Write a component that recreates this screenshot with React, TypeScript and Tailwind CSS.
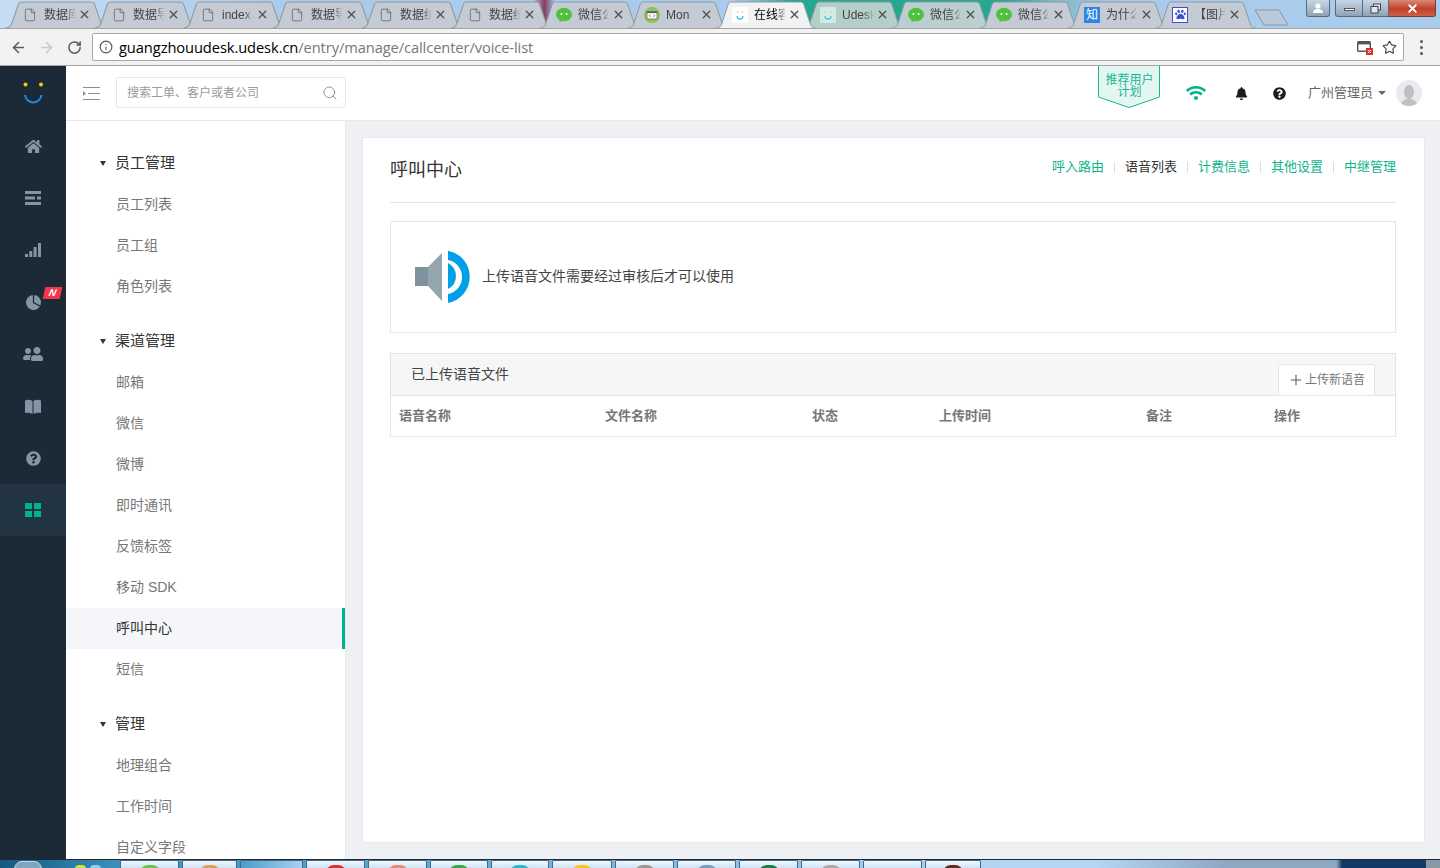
import React from "react";
import { ArrowLeft, ArrowRight, File, Info, RotateCw, Search, Star, X, Plus } from "lucide-react";
import { FaBell, FaHome, FaPaw, FaQuestionCircle, FaUserFriends, FaWifi } from "react-icons/fa";

const FONT = "[font-family:'Liberation_Sans','Noto_Sans_CJK_SC',sans-serif]";

const WechatIcon = () => (
  <svg width="16" height="16" viewBox="0 0 16 16">
    <ellipse cx="8" cy="7.500" rx="8" ry="6.800" fill="#4fc13f" />
    <path d="M4 12l-.6 3.400L7 13z" fill="#4fc13f" />
    <circle cx="5.400" cy="7" r="1" fill="#fff" />
    <circle cx="10.600" cy="7" r="1" fill="#fff" />
  </svg>
);

const DocIcon = () => <File size={14} strokeWidth={1.2} className="text-[#555]" />;

const MonIcon = () => (
  <svg width="16" height="16" viewBox="0 0 16 16">
    <circle cx="8" cy="8" r="8" fill="#8bc25a" />
    <rect x="3" y="4.500" width="10" height="7.500" fill="#f4f6f2" stroke="#555" strokeWidth=".6" />
    <rect x="3" y="4.500" width="10" height="1.500" fill="#555" />
    <path d="M6.500 7.500l-1.200 1.200 1.200 1.200M9.500 7.500l1.200 1.200-1.200 1.200" fill="none" stroke="#555" strokeWidth=".7" />
  </svg>
);

const SmileIcon = ({ bg }: { bg: string }) => (
  <svg width="16" height="16" viewBox="0 0 16 16">
    <rect width="16" height="16" fill={bg} />
    <circle cx="5.500" cy="5" r=".8" fill="#e8c93a" />
    <circle cx="10.500" cy="5" r=".8" fill="#e8c93a" />
    <path d="M5 9a3 3 0 006 0" fill="none" stroke="#48c6dc" strokeWidth="1.300" />
  </svg>
);

const ZhiIcon = () => (
  <span className="flex h-4 w-4 items-center justify-center bg-[#2b87e3] text-[12px] leading-none text-white">知</span>
);

const BaiduIcon = () => (
  <span className="flex h-4 w-4 items-center justify-center border border-[#3c4fd8] bg-white">
    <FaPaw size={11} className="text-[#3c4fd8]" />
  </span>
);

const tabs = [
  { icon: <DocIcon />, title: "数据库设计" },
  { icon: <DocIcon />, title: "数据导出" },
  { icon: <DocIcon />, title: "index" },
  { icon: <DocIcon />, title: "数据导入" },
  { icon: <DocIcon />, title: "数据统计" },
  { icon: <DocIcon />, title: "数据统计" },
  { icon: <WechatIcon />, title: "微信公众" },
  { icon: <MonIcon />, title: "Mon" },
  { icon: <SmileIcon bg="#ffffff" />, title: "在线客服", active: true },
  { icon: <SmileIcon bg="#d2ebe6" />, title: "Udesk", fill: "#b4cfca" },
  { icon: <WechatIcon />, title: "微信公众", fill: "#bccfd0" },
  { icon: <WechatIcon />, title: "微信公众" },
  { icon: <ZhiIcon />, title: "为什么" },
  { icon: <BaiduIcon />, title: "【图片" },
];

const Tab = ({
  icon,
  title,
  active,
  fill,
  wide,
}: {
  icon: React.ReactNode;
  title: string;
  active?: boolean;
  fill?: string;
  wide?: boolean;
}) => (
  <div
    className={`relative -mr-[12px] flex h-[27px] shrink-0 items-center pl-[16px] ${wide ? "w-[101px]" : "w-[100px]"} ${
      active ? "z-10" : ""
    }`}
  >
    <svg className="absolute inset-0 h-full w-full" viewBox="0 0 100 27" preserveAspectRatio="none">
      <path
        d="M0 27C4 27 5 25 6 22L12 4C13 1 14 1 17 1H83C86 1 87 1 88 4L94 22C95 25 96 27 100 27"
        fill={active ? "#f2f2f2" : fill || "#c5cbd5"}
        stroke="#8f98a4"
      />
    </svg>
    <span className="relative flex h-4 w-4 items-center justify-center">{icon}</span>
    <span
      className={`relative ml-[6px] w-[32px] overflow-hidden whitespace-nowrap text-[12px] leading-4 [mask-image:linear-gradient(90deg,#000_70%,transparent)] ${
        active ? "text-black" : "text-[#444]"
      }`}
    >
      {title}
    </span>
    <X size={13} strokeWidth={2.6} className="relative ml-[2px] text-[#555]" />
  </div>
);

const WindowControls = () => (
  <div className="absolute right-[4px] top-0 z-20 flex h-[17px] items-stretch">
    <div className="mr-[5px] flex w-[24px] items-center justify-center rounded-b-[3px] border border-t-0 border-[#5a6b7c] bg-[linear-gradient(#c9d6e3,#8ea3b8)]">
      <svg width="10" height="11" viewBox="0 0 10 11">
        <circle cx="5" cy="3" r="2.600" fill="#fff" />
        <path d="M0 10c0-3 2-4 5-4s5 1 5 4z" fill="#fff" />
      </svg>
    </div>
    <div className="flex w-[28px] items-center justify-center rounded-bl-[3px] border border-t-0 border-[#5a6b7c] bg-[linear-gradient(#c9d6e3,#8ea3b8)]">
      <span className="mt-[3px] h-[3px] w-[11px] border border-[#555] bg-white" />
    </div>
    <div className="flex w-[26px] items-center justify-center border-b border-r border-[#5a6b7c] bg-[linear-gradient(#c9d6e3,#8ea3b8)]">
      <svg width="11" height="11" viewBox="0 0 11 11" fill="none" stroke="#444">
        <rect x="3.500" y="1" width="7" height="6" fill="#dfe6ee" />
        <rect x="1" y="3.500" width="7" height="6.500" fill="#dfe6ee" />
      </svg>
    </div>
    <div className="flex w-[47px] items-center justify-center rounded-br-[3px] border-b border-r border-[#7a4038] bg-[linear-gradient(#d98a78,#c13f28_55%,#d0604a)]">
      <X size={13} strokeWidth={3.4} className="text-white" />
    </div>
  </div>
);

const BrowserChrome = () => (
  <>
    <div className="relative flex h-[28px] shrink-0 items-end overflow-hidden bg-[linear-gradient(90deg,#c6ddf4_0,#a9cbec_20%,#a9cbec_37%,#85405f_37.8%,#a9cbec_38.6%,#a9cbec_51%,#27a78f_55%,#27a78f_70%,#7db8c8_73%,#a9cbec_78%,#a9cbec_100%)] pl-[6px]">
      {tabs.map((t, i) => (
        <Tab key={`tab-${i + 1}`} {...t} wide={i < 6} />
      ))}
      <svg width="36" height="20" viewBox="0 0 36 20" className="relative mb-[1px] ml-[10px] shrink-0">
        <path d="M1 3h24l9 15H10z" fill="#b9c9da" stroke="#8b95a1" />
      </svg>
      <WindowControls />
    </div>
    <div className="relative flex h-[38px] shrink-0 items-center border-y border-[#a3a3a3] bg-[#f2f2f2] pl-[10px] pr-[10px]">
      <ArrowLeft size={17} strokeWidth={2.2} className="text-[#5a5a5a]" />
      <ArrowRight size={17} strokeWidth={2.2} className="ml-[11px] text-[#c8c8c8]" />
      <RotateCw size={15} strokeWidth={2.4} className="ml-[12px] text-[#5a5a5a]" />
      <div className="ml-[10px] flex h-[28px] w-[1312px] items-center rounded-[2px] border border-[#a9a9a9] bg-white pl-[6px] pr-[6px]">
        <Info size={14} className="text-[#555]" />
        <span className="ml-[6px] font-['Open_Sans','Noto_Sans',sans-serif] text-[14.700px] leading-none tracking-[-0.1px] text-black">
          guangzhouudesk.udesk.cn<span className="text-[#777]">/entry/manage/callcenter/voice-list</span>
        </span>
        <div className="ml-auto flex items-center gap-[9px]">
          <svg width="16" height="15" viewBox="0 0 16 15">
            <rect x=".7" y="1.700" width="12.600" height="9.600" rx="1" fill="none" stroke="#555" strokeWidth="1.400" />
            <rect x="1" y="2" width="12" height="2.400" fill="#555" />
            <rect x="9" y="8" width="7" height="7" fill="#d9342b" />
            <path d="M11 10l3 3M14 10l-3 3" stroke="#fff" />
          </svg>
          <Star size={15} strokeWidth={1.8} className="text-[#444]" />
        </div>
      </div>
      <div className="ml-[16px] flex flex-col gap-[3px]">
        <span className="h-[3px] w-[3px] rounded-full bg-[#555]" />
        <span className="h-[3px] w-[3px] rounded-full bg-[#555]" />
        <span className="h-[3px] w-[3px] rounded-full bg-[#555]" />
      </div>
    </div>
  </>
);

const ListIcon = () => (
  <svg width="16" height="14" viewBox="0 0 16 14" fill="#8496a6">
    <rect width="16" height="3" />
    <rect y="5.500" width="10" height="3" />
    <rect x="12" y="5.500" width="4" height="3" />
    <rect y="11" width="16" height="3" />
  </svg>
);

const BarsIcon = () => (
  <svg width="16" height="14" viewBox="0 0 16 14" fill="#8496a6">
    <rect y="11" width="3" height="3" />
    <rect x="4.300" y="8" width="3" height="6" />
    <rect x="8.600" y="4" width="3" height="10" />
    <rect x="13" width="3" height="14" />
  </svg>
);

const PieIcon = () => (
  <svg width="15" height="15" viewBox="0 0 15 15">
    <circle cx="7.500" cy="7.500" r="7.500" fill="#8496a6" />
    <path d="M7.500 0v7.500l6.500 3.500" fill="none" stroke="#1c2a37" strokeWidth="1.300" />
  </svg>
);

const BookIcon = () => (
  <svg width="16" height="15" viewBox="0 0 16 15" fill="#8496a6">
    <path d="M0 1.500C2.500 .5 5 .5 7.500 2v13C5 13.500 2.500 13.500 0 14z" />
    <path d="M16 1.500C13.500 .5 11 .5 8.500 2v13c2.500-1.500 5-1.500 7.500-1z" />
  </svg>
);

const GridIcon = () => (
  <svg width="16" height="14" viewBox="0 0 16 14" fill="#00b38b">
    <rect width="7" height="6" />
    <rect x="9" width="7" height="6" />
    <rect y="8" width="7" height="6" />
    <rect x="9" y="8" width="7" height="6" />
  </svg>
);

const railIcons = [
  { icon: <FaHome size={17} className="text-[#8496a6]" /> },
  { icon: <ListIcon /> },
  { icon: <BarsIcon /> },
  { icon: <PieIcon />, badge: true },
  { icon: <FaUserFriends size={20} className="-scale-x-100 text-[#8496a6]" /> },
  { icon: <BookIcon /> },
  { icon: <FaQuestionCircle size={15} className="text-[#8496a6]" /> },
  { icon: <GridIcon />, active: true },
];

const Rail = () => (
  <div className="w-[66px] shrink-0 bg-[#1c2a37]">
    <div className="flex h-[54px] justify-center pt-[15px]">
      <svg width="20" height="24" viewBox="0 0 20 24">
        <circle cx="2.500" cy="3.500" r="2" fill="#f5c518" />
        <circle cx="18" cy="3.500" r="2" fill="#f5c518" />
        <path d="M2 14a8.300 8.300 0 0016.500 0" fill="none" stroke="#1d8fe8" strokeWidth="2" />
      </svg>
    </div>
    {railIcons.map((item, i) => (
      <div
        key={`rail-${i + 1}`}
        className={`relative flex h-[52px] items-center justify-center ${item.active ? "bg-[#223341]" : ""}`}
      >
        {item.icon}
        {item.badge && (
          <span className="absolute left-[44px] top-[11px] flex h-[12px] w-[17px] -skew-x-12 items-center justify-center bg-[#f4364c] text-[10px] font-bold italic leading-none text-white">
            N
          </span>
        )}
      </div>
    ))}
  </div>
);

const TopBar = () => (
  <div className="flex h-[55px] shrink-0 items-center border-b border-[#e8e9ed] bg-white pl-[17px] pr-[18px]">
    <svg width="17" height="13" viewBox="0 0 17 13" stroke="#8a8f95" fill="none">
      <path d="M0 .5h17M5 6.500h12M0 12.500h17" />
      <path d="M0 4l3 2.500L0 9z" fill="#8a8f95" stroke="none" />
    </svg>
    <div className="mb-[1px] ml-[16px] flex h-[31px] w-[230px] items-center justify-between rounded-[2px] border border-[#e6e8ec] pl-[10px] pr-[7px]">
      <span className="text-[12px] text-[#9a9a9a]">搜索工单、客户或者公司</span>
      <Search size={16} strokeWidth={1.2} className="text-[#777]" />
    </div>
    <div className="relative ml-auto flex h-[42px] w-[62px] self-start justify-center pt-[8px] text-center text-[12px] leading-[12px] text-[#1ab592]">
      <svg className="absolute inset-0 h-full w-full" viewBox="0 0 62 42" preserveAspectRatio="none">
        <path d="M.5 0v31L31 41.500 61.500 31V0" fill="#e4f6f1" stroke="#17b890" />
      </svg>
      <span className="relative">
        推荐用户
        <br />
        计划
      </span>
    </div>
    <FaWifi size={20} className="ml-[26px] text-[#00b38b]" />
    <FaBell size={13} className="ml-[29px] text-[#1c1c1c]" />
    <FaQuestionCircle size={13} className="ml-[25px] text-[#1c1c1c]" />
    <span className="ml-[21.500px] text-[13px] text-[#666]">广州管理员</span>
    <span className="ml-[5px] h-0 w-0 border-x-[4px] border-t-[4px] border-x-transparent border-t-[#666]" />
    <span className="ml-[10px] flex h-[26px] w-[26px] items-end justify-center overflow-hidden rounded-full bg-[#e8eaee]">
      <svg width="16" height="22" viewBox="0 0 16 22" fill="#bcbfc4">
        <ellipse cx="8" cy="8" rx="5" ry="7" />
        <path d="M0 22c0-5 3-7 8-7s8 2 8 7z" />
      </svg>
    </span>
  </div>
);

const menu = [
  { title: "员工管理", items: ["员工列表", "员工组", "角色列表"] },
  { title: "渠道管理", items: ["邮箱", "微信", "微博", "即时通讯", "反馈标签", "移动 SDK", "呼叫中心", "短信"] },
  { title: "管理", items: ["地理组合", "工作时间", "自定义字段"] },
];

const SideMenu = () => (
  <div className="w-[280px] shrink-0 overflow-hidden border-r border-[#e8e9ed] bg-white pt-[22px]">
    {menu.map((group) => (
      <div key={group.title} className="mb-[14px]">
        <div className="flex h-[41px] items-center pl-[34px] text-[15px] text-[#333]">
          <span className="mr-[9px] h-0 w-0 border-x-[3.500px] border-t-[5px] border-x-transparent border-t-[#333]" />
          {group.title}
        </div>
        {group.items.map((item) => {
          const active = item === "呼叫中心";
          return (
            <div
              key={item}
              className={`flex h-[41px] items-center pl-[50px] text-[14px] ${
                active ? "border-r-[3px] border-[#00b38b] bg-[#f5f6fa] text-[#333]" : "text-[#777]"
              }`}
            >
              {item}
            </div>
          );
        })}
      </div>
    ))}
  </div>
);

const Speaker = () => (
  <svg width="56" height="54" viewBox="0 0 56 54" className="shrink-0">
    <rect x="1" y="17" width="13" height="19" fill="#7f929e" />
    <path d="M14 17L28 3v48L14 36z" fill="#95a5ae" />
    <path d="M34 .7A26.600 26.600 0 0134 53V44A17.300 17.300 0 0034 10z" fill="#00a0e9" />
    <path d="M34 13A14.600 14.600 0 0134 39z" fill="#00a0e9" />
  </svg>
);

const links = ["呼入路由", "语音列表", "计费信息", "其他设置", "中继管理"];
const columns = ["语音名称", "文件名称", "状态", "上传时间", "备注", "操作"];

const Content = () => (
  <div className="min-w-0 flex-1 bg-[#eef0f4] py-[16px] pl-[16px] pr-[15px]">
    <div className="h-full border border-[#e8e9ed] bg-white pl-[27px] pr-[28px]">
      <div className="flex h-[65px] items-start justify-between border-b border-[#e3e3e3]">
        <span className="mt-[20px] text-[18px] leading-[24px] text-[#333]">呼叫中心</span>
        <div className="mt-[19px] flex items-center text-[13px] leading-[20px]">
          {links.map((l, i) => (
            <React.Fragment key={l}>
              {i > 0 && <span className="mx-[10px] h-[11px] w-px bg-[#d8dde0]" />}
              <span className={l === "语音列表" ? "text-[#333]" : "text-[#12b48d]"}>{l}</span>
            </React.Fragment>
          ))}
        </div>
      </div>
      <div className="mt-[18px] flex h-[112px] items-center border border-[#e5e5e5] pl-[23px]">
        <Speaker />
        <span className="mb-[2px] ml-[12px] text-[14px] text-[#444]">上传语音文件需要经过审核后才可以使用</span>
      </div>
      <div className="mt-[20px] border border-[#e5e5e5]">
        <div className="flex h-[42px] items-center justify-between border-b border-[#e5e5e5] bg-[#f5f7f7] pl-[20px] pr-[20px]">
          <span className="text-[14px] text-[#444]">已上传语音文件</span>
          <div className="mt-[11px] flex h-[32px] w-[97px] items-center justify-center rounded-t-[2px] border border-[#e5e5e5] bg-white text-[12px] text-[#777]">
            <Plus size={16} strokeWidth={1.6} className="mr-[1px] text-[#555]" />
            上传新语音
          </div>
        </div>
        <div className="grid h-[40px] grid-cols-[206px_207px_127px_207px_128px_1fr] items-center pl-[8px] text-[13px] font-bold text-[#777]">
          {columns.map((c) => (
            <span key={c}>{c}</span>
          ))}
        </div>
      </div>
    </div>
  </div>
);

const taskItems = [
  { width: "w-[59px]", top: "bg-[#6cc24a]" },
  { width: "w-[55px]", top: "bg-[#d9a05b]" },
  { width: "w-[63px]", dark: true },
  { width: "w-[59px]", top: "bg-[#d9342b]" },
  { width: "w-[59px]", top: "bg-[#e88a7a]" },
  { width: "w-[58px]", top: "bg-[#3fa34d]" },
  { width: "w-[58px]", top: "bg-[#29b6c8]" },
  { width: "w-[60px]", top: "bg-[#f5c518]" },
  { width: "w-[59px]", top: "bg-[#999]" },
  { width: "w-[59px]", top: "bg-[#7f9db8]" },
  { width: "w-[59px]", top: "bg-[#1e7a4c]" },
  { width: "w-[59px]", top: "bg-[#aaa]" },
  { width: "w-[59px]" },
  { width: "w-[56px]", top: "bg-[#5a2e1e]" },
];

const Taskbar = () => (
  <div className="flex h-[9px] shrink-0 items-stretch overflow-hidden border-t border-[#1c2a37] bg-[linear-gradient(90deg,#14587f_0,#3a8fb8_8%,#b5d6f5_70%,#b5d6f5_76%,#8ea8c4_85%,#8ea8c4_92.800%,#123a66_93.200%,#123a66_99%,#8a97a5_99%)]">
    <div className="flex w-[120px] shrink-0 pl-[14px]">
      <span className="mt-[1px] h-[16px] w-[28px] rounded-full border border-[#c5d6e3] bg-[#7fa6c0]" />
      <span className="ml-[33px] mt-[5px] h-[8px] w-[11px] rounded-full bg-[#d6e03a]" />
      <span className="ml-[4px] mt-[5px] h-[8px] w-[11px] rounded-full bg-[#8fd0f0]" />
    </div>
    {taskItems.map((t, i) => (
      <div
        key={`task-${i + 1}`}
        className={`mr-[3px] flex shrink-0 justify-center rounded-t-[2px] border border-b-0 border-[#3f6a8c] ${t.width} ${
          t.dark ? "bg-[linear-gradient(90deg,#4a9cc9,#a9d2f2)]" : "bg-[linear-gradient(#f2f7fc,#cfe3f5)]"
        }`}
      >
        {t.top && <span className={`mt-[4px] h-[8px] w-[20px] rounded-t-full ${t.top}`} />}
      </div>
    ))}
  </div>
);

const App = () => (
  <div className={`flex h-[868px] w-[1440px] flex-col overflow-hidden bg-white ${FONT}`}>
    <BrowserChrome />
    <div className="flex min-h-0 flex-1">
      <Rail />
      <div className="flex min-w-0 flex-1 flex-col">
        <TopBar />
        <div className="flex min-h-0 flex-1">
          <SideMenu />
          <Content />
        </div>
      </div>
    </div>
    <Taskbar />
  </div>
);

export default App;
